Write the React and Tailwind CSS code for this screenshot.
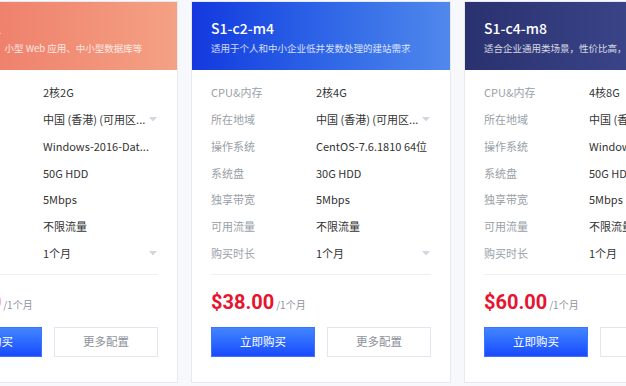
import React from "react";

const plans = [
  {
    name: "S1-c1-m2",
    desc: "适合个人网站、小型 Web 应用、中小型数据库等",
    header: "bg-gradient-to-r from-[#ec7262] to-[#f4a184]",
    specs: ["2核2G", "中国 (香港) (可用区...", "Windows-2016-Dat...", "50G HDD", "5Mbps", "不限流量", "1个月"],
    price: "$19.00",
  },
  {
    name: "S1-c2-m4",
    desc: "适用于个人和中小企业低并发数处理的建站需求",
    header: "bg-gradient-to-r from-[#1537df] to-[#5088ec]",
    specs: ["2核4G", "中国 (香港) (可用区...", "CentOS-7.6.1810 64位", "30G HDD", "5Mbps", "不限流量", "1个月"],
    price: "$38.00",
  },
  {
    name: "S1-c4-m8",
    desc: "适合企业通用类场景，性价比高，满足大部分业务需求",
    header: "bg-gradient-to-r from-[#2a316f] to-[#434f96]",
    specs: ["4核8G", "中国 (香港) (可用区...", "Windows-2016-Dat...", "50G HDD", "5Mbps", "不限流量", "1个月"],
    price: "$60.00",
  },
];

const labels = ["CPU&内存", "所在地域", "操作系统", "系统盘", "独享带宽", "可用流量", "购买时长"];
// rows that show a dropdown caret
const withCaret = [1, 6];

const Caret = () => (
  <svg width="8" height="5" viewBox="0 0 8 5" className="shrink-0">
    <path d="M0 0 H8 L4 4.5 Z" fill="#d3d6de" />
  </svg>
);

const PlanCard = ({ plan }) => (
  <div className="w-[260px] h-[382px] shrink-0 flex flex-col border border-[#e7e9f1] bg-white">
    <div className={`h-[68px] px-[19px] pt-[16px] text-white ${plan.header}`}>
      <div className="text-[14px] leading-[21px] font-medium whitespace-nowrap">{plan.name}</div>
      <div className="mt-[3px] text-[9.5px] leading-[13px] text-white/80 whitespace-nowrap">{plan.desc}</div>
    </div>

    <div className="flex flex-col px-[19px] pt-[9px]">
      {labels.map((label, i) => (
        <div key={label} className="h-[26.8px] flex items-center text-[11px]">
          <span className="w-[105px] shrink-0 text-[#9a9fa8]">{label}</span>
          <span className="flex-1 flex items-center justify-between pr-[1px] text-[#333] whitespace-nowrap">
            <span>{plan.specs[i]}</span>
            {withCaret.includes(i) && <Caret />}
          </span>
        </div>
      ))}

      <div className="mt-[7px] h-px bg-[#eef0f5]" />

      <div className="mt-[12px] h-[28px] flex items-baseline gap-[2px] whitespace-nowrap">
        <span className="text-[20px] font-bold text-[#e8132e] font-['Roboto',sans-serif]">{plan.price}</span>
        <span className="text-[10px] text-[#8d929b]">/1个月</span>
      </div>

      <div className="mt-[12px] flex gap-[12px]">
        <button className="w-[104px] h-[30px] text-[11.5px] text-white bg-gradient-to-b from-[#4384ff] to-[#1c48ff] border border-[#3d74ff]">
          立即购买
        </button>
        <button className="w-[104px] h-[30px] text-[11.5px] text-[#8d929b] bg-white border border-[#e3e6ee]">
          更多配置
        </button>
      </div>
    </div>
  </div>
);

const App = () => {
  return (
    <div className="w-[626px] h-[386px] overflow-hidden bg-[#f7f8fb] pt-[1px] font-['Noto_Sans_CJK_SC','Noto_Sans',sans-serif]">
      <div className="flex gap-[13px] ml-[-82px]">
        {plans.map((plan) => (
          <PlanCard key={plan.name} plan={plan} />
        ))}
      </div>
    </div>
  );
};

export default App;
